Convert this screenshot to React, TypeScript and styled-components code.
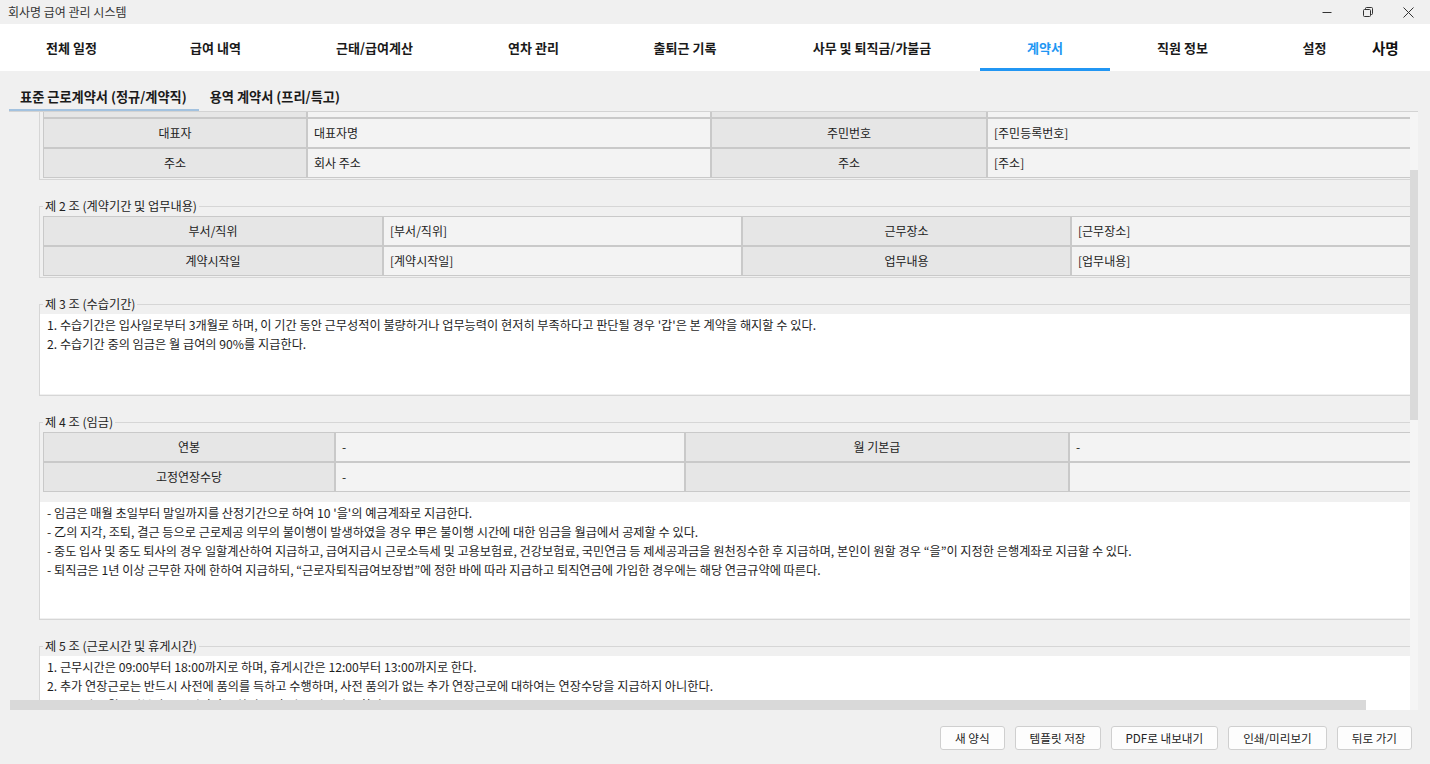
import React, { useLayoutEffect, useRef } from 'react';
import styled, { createGlobalStyle } from 'styled-components';

const GlobalStyle = createGlobalStyle`
  html, body {
    margin: 0;
    padding: 0;
  }
  body {
    background: #f0f0f0;
    font-family: "Noto Sans CJK KR", "Malgun Gothic", "Noto Sans", sans-serif;
    color: #1e1e1e;
    overflow: hidden;
  }
  * {
    box-sizing: border-box;
  }
`;

const Window = styled.div`
  width: 1430px;
  height: 764px;
  display: flex;
  flex-direction: column;
  overflow: hidden;
`;

const TitleBar = styled.div`
  height: 24px;
  flex: none;
  display: flex;
  align-items: center;
  justify-content: space-between;
  padding-left: 8px;
`;

const TitleText = styled.span`
  font-size: 12px;
  line-height: 18px;
  color: #333;
`;

const WindowControls = styled.div`
  display: flex;
  height: 100%;
  margin-right: 1px;
`;

const ControlButton = styled.button`
  width: 41px;
  height: 24px;
  border: none;
  padding: 0;
  background: transparent;
  color: #333;
  display: flex;
  align-items: center;
  justify-content: center;
`;

const NavBar = styled.nav`
  height: 47px;
  flex: none;
  background: #fff;
  display: flex;
  align-items: stretch;
`;

const NavTab = styled.div<{ $w: number; $active?: boolean }>`
  width: ${p => p.$w}px;
  flex: none;
  display: flex;
  align-items: center;
  justify-content: center;
  padding-top: 3px;
  border-bottom: 3px solid ${p => (p.$active ? '#2196f3' : 'transparent')};
  font-size: 13px;
  line-height: 20px;
  font-weight: 700;
  color: ${p => (p.$active ? '#2196f3' : '#1a1a1a')};
  white-space: nowrap;
`;

const Brand = styled.div`
  display: flex;
  align-items: center;
  margin-left: -2px;
  font-size: 14.5px;
  line-height: 22px;
  font-weight: 700;
  color: #111;
`;

const SubTabBar = styled.div`
  height: 40px;
  flex: none;
  display: flex;
  align-items: flex-end;
  margin: 0 12px 0 9px;
`;

const SubTab = styled.div<{ $active?: boolean }>`
  height: 28px;
  padding: 2px 12px 0 11px;
  display: flex;
  align-items: center;
  border-bottom: 2px solid ${p => (p.$active ? '#a3c2df' : 'transparent')};
  font-size: 13.2px;
  line-height: 20px;
  font-weight: 700;
  color: #1a1a1a;
  white-space: nowrap;
`;

const Pane = styled.div`
  flex: 1;
  min-height: 0;
  display: flex;
  margin: 0 12px 0 9px;
  padding-left: 1px;
  border-top: 1px solid #d3d3d3;
`;

const ViewportFrame = styled.div`
  flex: 1;
  min-width: 0;
  position: relative;
`;

const Viewport = styled.div`
  height: 100%;
  overflow: hidden;
`;

const HScrollThumb = styled.div`
  position: absolute;
  left: 0;
  bottom: 0;
  width: 1356px;
  height: 10px;
  background: #d9d9d9;
`;

const VScrollTrack = styled.div`
  width: 8px;
  flex: none;
  background: #f5f5f5;
  padding-top: 58px;
`;

const VScrollThumb = styled.div`
  height: 250px;
  background: #dadada;
`;

const Content = styled.div`
  width: 1445px;
  padding: 12px 5px 30px 29px;
`;

const Clause = styled.fieldset`
  margin: 0 0 17px 0;
  padding: 1px 0 1px 0;
  border: 1px solid #d6d6d6;
  min-width: 0;
`;

const ClauseTitle = styled.legend`
  margin-left: 3px;
  padding: 0 2px;
  font-size: 12.2px;
  line-height: 18px;
  color: #222;
`;

const InfoGrid = styled.div<{ $cols: string }>`
  display: grid;
  grid-template-columns: ${p => p.$cols};
  margin: 0 3px;
`;

const LabelCell = styled.div`
  height: 30px;
  border: 1px solid #c9c9c9;
  background: #e6e6e6;
  display: flex;
  align-items: center;
  justify-content: center;
  font-size: 12px;
  line-height: 18px;
  color: #222;
  white-space: nowrap;
`;

const ValueCell = styled(LabelCell)`
  background: #f3f3f3;
  justify-content: flex-start;
  padding-left: 6px;
`;

const ClauseText = styled.div<{ $h: number; $gap?: number }>`
  height: ${p => p.$h}px;
  margin-top: ${p => p.$gap ?? 0}px;
  padding: 2px 7px;
  background: #fff;
  font-size: 12.2px;
  line-height: 19px;
  color: #1e1e1e;
  white-space: nowrap;
`;

const ButtonBar = styled.div`
  height: 54px;
  flex: none;
  display: flex;
  justify-content: flex-end;
  align-items: flex-start;
  gap: 10px;
  padding: 16px 18px 0 0;
`;

const ActionButton = styled.button`
  height: 24px;
  padding: 0 14px;
  background: #fdfdfd;
  border: 1px solid #cfcfcf;
  border-radius: 3px;
  font-family: inherit;
  font-size: 11.6px;
  line-height: 18px;
  color: #222;
`;

const navTabs = [
  { label: '전체 일정', w: 143 },
  { label: '급여 내역', w: 145 },
  { label: '근태/급여계산', w: 173 },
  { label: '연차 관리', w: 145 },
  { label: '출퇴근 기록', w: 158 },
  { label: '사무 및 퇴직금/가불금', w: 216 },
  { label: '계약서', w: 130, active: true },
  { label: '직원 정보', w: 145 },
  { label: '설정', w: 119 },
];

type Row = [string, string, string, string];

interface InfoTableProps {
  cols: string;
  rows: Row[];
  anchorRow?: number;
  anchorRef?: React.Ref<HTMLDivElement>;
}

const InfoTable = ({ cols, rows, anchorRow, anchorRef }: InfoTableProps) => (
  <InfoGrid $cols={cols}>
    {rows.map((row, i) => (
      <React.Fragment key={i}>
        <LabelCell ref={i === anchorRow ? anchorRef : undefined}>{row[0]}</LabelCell>
        <ValueCell>{row[1]}</ValueCell>
        <LabelCell>{row[2]}</LabelCell>
        <ValueCell>{row[3]}</ValueCell>
      </React.Fragment>
    ))}
  </InfoGrid>
);

const partyRows: Row[] = [
  ['상호', '회사명', '성명', '[근로자명]'],
  ['사업자번호', '[사업자번호]', '생년월일', '[생년월일]'],
  ['대표자', '대표자명', '주민번호', '[주민등록번호]'],
  ['주소', '회사 주소', '주소', '[주소]'],
];

const termRows: Row[] = [
  ['부서/직위', '[부서/직위]', '근무장소', '[근무장소]'],
  ['계약시작일', '[계약시작일]', '업무내용', '[업무내용]'],
];

const wageRows: Row[] = [
  ['연봉', '-', '월 기본급', '-'],
  ['고정연장수당', '-', '', ''],
];

const probationLines = [
  "1. 수습기간은 입사일로부터 3개월로 하며, 이 기간 동안 근무성적이 불량하거나 업무능력이 현저히 부족하다고 판단될 경우 '갑'은 본 계약을 해지할 수 있다.",
  '2. 수습기간 중의 임금은 월 급여의 90%를 지급한다.',
];

const wageLines = [
  "- 임금은 매월 초일부터 말일까지를 산정기간으로 하여 10 '을'의 예금계좌로 지급한다.",
  '- 乙의 지각, 조퇴, 결근 등으로 근로제공 의무의 불이행이 발생하였을 경우 甲은 불이행 시간에 대한 임금을 월급에서 공제할 수 있다.',
  '- 중도 입사 및 중도 퇴사의 경우 일할계산하여 지급하고, 급여지급시 근로소득세 및 고용보험료, 건강보험료, 국민연금 등 제세공과금을 원천징수한 후 지급하며, 본인이 원할 경우 “을”이 지정한 은행계좌로 지급할 수 있다.',
  '- 퇴직금은 1년 이상 근무한 자에 한하여 지급하되, “근로자퇴직급여보장법”에 정한 바에 따라 지급하고 퇴직연금에 가입한 경우에는 해당 연금규약에 따른다.',
];

const hoursLines = [
  '1. 근무시간은 09:00부터 18:00까지로 하며, 휴게시간은 12:00부터 13:00까지로 한다.',
  '2. 추가 연장근로는 반드시 사전에 품의를 득하고 수행하며, 사전 품의가 없는 추가 연장근로에 대하여는 연장수당을 지급하지 아니한다.',
  '3. 근무일은 월요일부터 금요일까지로 하며, 주휴일은 일요일로 한다.',
];

const leaveLines = [
  '1. 연차유급휴가는 근로기준법에서 정하는 바에 따라 부여한다.',
  '2. 근로자의 날 및 관공서의 공휴일은 유급휴일로 한다.',
];

const insuranceLines = [
  '1. 고용보험, 산재보험, 국민연금, 건강보험에 가입한다.',
];

const Lines = ({ lines }: { lines: string[] }) => (
  <>
    {lines.map((line, i) => (
      <div key={i}>{line}</div>
    ))}
  </>
);

const actions = ['새 양식', '템플릿 저장', 'PDF로 내보내기', '인쇄/미리보기', '뒤로 가기'];

const App = () => {
  const viewportRef = useRef<HTMLDivElement>(null);
  const anchorRef = useRef<HTMLDivElement>(null);

  // the form is shown scrolled so that the 대표자 row sits just under the tab line
  useLayoutEffect(() => {
    const vp = viewportRef.current;
    const row = anchorRef.current;
    if (!vp || !row) return;
    const offset = row.getBoundingClientRect().top - vp.getBoundingClientRect().top + vp.scrollTop;
    vp.scrollTop = offset - 6;
  }, []);

  return (
    <>
      <GlobalStyle />
      <Window>
        <TitleBar>
          <TitleText>회사명 급여 관리 시스템</TitleText>
          <WindowControls>
            <ControlButton aria-label="minimize">
              <svg width="10" height="10" viewBox="0 0 10 10">
                <line x1="0.5" y1="5.5" x2="9.5" y2="5.5" stroke="currentColor" strokeWidth="1" />
              </svg>
            </ControlButton>
            <ControlButton aria-label="restore">
              <svg width="10" height="10" viewBox="0 0 10 10" fill="none" stroke="currentColor" strokeWidth="1">
                <rect x="0.5" y="2.5" width="7" height="7" rx="1" />
                <path d="M2.5 2.5 V1.5 a1 1 0 0 1 1 -1 H8.5 a1 1 0 0 1 1 1 V6.5 a1 1 0 0 1 -1 1 H7.5" />
              </svg>
            </ControlButton>
            <ControlButton aria-label="close">
              <svg width="11" height="11" viewBox="0 0 11 11" stroke="currentColor" strokeWidth="1">
                <line x1="0.5" y1="0.5" x2="10.5" y2="10.5" />
                <line x1="10.5" y1="0.5" x2="0.5" y2="10.5" />
              </svg>
            </ControlButton>
          </WindowControls>
        </TitleBar>

        <NavBar>
          {navTabs.map(tab => (
            <NavTab key={tab.label} $w={tab.w} $active={tab.active}>
              {tab.label}
            </NavTab>
          ))}
          <Brand>사명</Brand>
        </NavBar>

        <SubTabBar>
          <SubTab $active>표준 근로계약서 (정규/계약직)</SubTab>
          <SubTab>용역 계약서 (프리/특고)</SubTab>
        </SubTabBar>

        <Pane>
          <ViewportFrame>
            <Viewport ref={viewportRef}>
              <Content>
                <Clause>
                  <ClauseTitle>제 1 조 (계약 당사자)</ClauseTitle>
                  <InfoTable
                    cols="264px 404px 276px 1fr"
                    rows={partyRows}
                    anchorRow={2}
                    anchorRef={anchorRef}
                  />
                </Clause>

                <Clause>
                  <ClauseTitle>제 2 조 (계약기간 및 업무내용)</ClauseTitle>
                  <InfoTable cols="340px 359px 329px 1fr" rows={termRows} />
                </Clause>

                <Clause>
                  <ClauseTitle>제 3 조 (수습기간)</ClauseTitle>
                  <ClauseText $h={80}>
                    <Lines lines={probationLines} />
                  </ClauseText>
                </Clause>

                <Clause>
                  <ClauseTitle>제 4 조 (임금)</ClauseTitle>
                  <InfoTable cols="292px 350px 384px 1fr" rows={wageRows} />
                  <ClauseText $h={116} $gap={10}>
                    <Lines lines={wageLines} />
                  </ClauseText>
                </Clause>

                <Clause>
                  <ClauseTitle>제 5 조 (근로시간 및 휴게시간)</ClauseTitle>
                  <ClauseText $h={100}>
                    <Lines lines={hoursLines} />
                  </ClauseText>
                </Clause>

                <Clause>
                  <ClauseTitle>제 6 조 (휴일 및 휴가)</ClauseTitle>
                  <ClauseText $h={80}>
                    <Lines lines={leaveLines} />
                  </ClauseText>
                </Clause>

                <Clause>
                  <ClauseTitle>제 7 조 (사회보험 적용)</ClauseTitle>
                  <ClauseText $h={80}>
                    <Lines lines={insuranceLines} />
                  </ClauseText>
                </Clause>
              </Content>
            </Viewport>
            <HScrollThumb />
          </ViewportFrame>
          <VScrollTrack>
            <VScrollThumb />
          </VScrollTrack>
        </Pane>

        <ButtonBar>
          {actions.map(label => (
            <ActionButton key={label}>{label}</ActionButton>
          ))}
        </ButtonBar>
      </Window>
    </>
  );
};

export default App;
